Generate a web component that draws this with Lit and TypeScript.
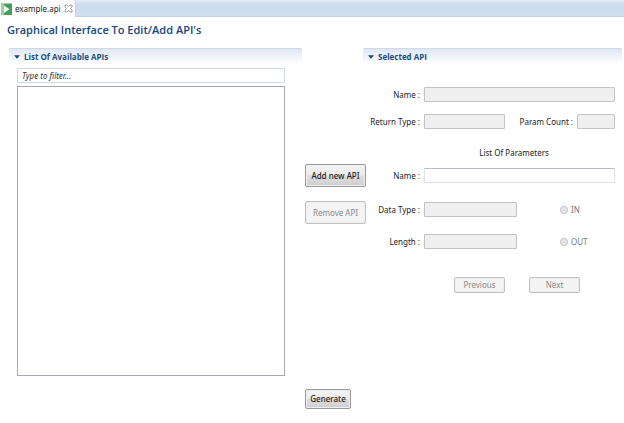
import { LitElement, html, css } from "lit";
import { customElement } from "lit/decorators.js";

@customElement("section-header")
class SectionHeader extends LitElement {
  static styles = css`
    :host { display: block; }
    .head {
      display: flex;
      align-items: center;
      gap: 4px;
      box-sizing: border-box;
      height: 16px;
      margin: 0;
      padding: 0 5px;
      border-top: 1px solid #ccd9e8;
      border-radius: 2px 2px 0 0;
      background: linear-gradient(#dfe7f2, #f1f5fa 55%, #ffffff);
      color: #1a4c82;
      font-family: "Open Sans", "Noto Sans", sans-serif;
      font-size: 8px;
      line-height: 12px;
      font-weight: 700;
      white-space: nowrap;
    }
    .arrow { width: 6px; height: 4px; flex: none; }
  `;
  render() {
    return html`<h2 class="head">
      <svg class="arrow" viewBox="0 0 6 4" aria-hidden="true"><path d="M0 0.3H6L3 3.8Z" fill="#14467c" /></svg><slot></slot>
    </h2>`;
  }
}

@customElement("app-root")
class AppRoot extends LitElement {
  static styles = css`
    :host {
      display: block;
      min-height: 100vh;
      background: #fff;
      color: #222;
      font-family: "Noto Sans", "Open Sans", sans-serif;
      font-size: 8px;
      line-height: 12px;
    }
    * { box-sizing: border-box; }
    .tabs {
      display: flex;
      height: 17px;
      background: linear-gradient(#e2edf7, #cddded 25%, #cfdfee);
      border-bottom: 1px solid #c3d3e6;
    }
    .tab {
      display: flex;
      align-items: center;
      gap: 3px;
      height: 17px;
      padding: 0 2px 0 1px;
      border-right: 1px solid #c3d3e6;
      border-radius: 0 3px 0 0;
      background: #fff;
    }
    .file { width: 11px; height: 12px; }
    .close {
      display: flex;
      margin: 0;
      padding: 0;
      border: 0;
      background: none;
    }
    .close svg { width: 9px; height: 9px; }
    .title {
      margin: 0;
      padding: 5px 7px 0;
      color: #12467f;
      font-family: "Open Sans", "Noto Sans", sans-serif;
      font-size: 11px;
      line-height: 16px;
      font-weight: 600;
    }
    .heads {
      display: grid;
      grid-template-columns: 293fr 259fr;
      gap: 61px;
      padding: 10px 2px 0 9px;
    }
    .body {
      display: grid;
      grid-template-columns: 268fr 61px 229fr;
      column-gap: 20px;
      row-gap: 13px;
      padding: 4px 9px 0 17px;
    }
    .list {
      display: flex;
      flex-direction: column;
      gap: 3px;
    }
    input, button {
      margin: 0;
      font: inherit;
      color: inherit;
    }
    .field {
      width: 100%;
      min-width: 0;
      height: 15px;
      padding: 0 4px;
      border: 1px solid #dde1ea;
      border-top-color: #b9bcc4;
      border-radius: 1px;
      background: #fff;
      outline: 0;
    }
    .field:disabled { border-color: #c3c3c3; background: #efefef; }
    .filter { border-color: #d4dae4; font-style: italic; }
    .filter::placeholder { color: #333; opacity: 1; }
    .entries {
      min-height: 290px;
      margin: 0;
      padding: 0;
      border: 1px solid #a5a8b2;
      list-style: none;
    }
    .actions {
      display: flex;
      flex-direction: column;
      gap: 14px;
      padding-top: 96px;
    }
    .button {
      height: 23px;
      padding: 0;
      border: 1px solid #999;
      border-radius: 2px;
      background: linear-gradient(#f4f4f4, #ebebeb 48%, #dcdcdc 52%, #cfcfcf);
      box-shadow: inset 0 0 0 1px #eee;
      color: #222;
      font-weight: 500;
      white-space: nowrap;
    }
    .button:disabled {
      border-color: #bfc3c6;
      background: #f4f4f4;
      color: #8a8a8a;
      font-weight: 400;
    }
    .generate { grid-column: 2; justify-self: start; width: 46px; height: 20px; }
    .form {
      display: grid;
      grid-template-columns: 54px 1fr;
      align-items: center;
      align-content: start;
      column-gap: 4px;
      margin-left: -20px;
      padding-top: 19px;
    }
    .label { text-align: right; white-space: nowrap; }
    .row { display: flex; align-items: center; justify-content: space-between; }
    .name { margin-bottom: 12px; }
    .type { margin-bottom: 18px; }
    .caption {
      grid-column: 2;
      margin: 0 0 9px;
      font-size: 8px;
      font-weight: 400;
      text-align: center;
      padding-right: 11px;
    }
    .param { margin-bottom: 19px; }
    .data { margin-bottom: 17px; }
    .length { margin-bottom: 28px; }
    .short { width: 81px; }
    .medium { width: 93px; }
    .count { display: flex; align-items: center; gap: 4px; white-space: nowrap; }
    .tiny { width: 38px; }
    .choice {
      display: flex;
      align-items: center;
      gap: 3px;
      width: 55px;
      color: #777;
    }
    .radio {
      appearance: none;
      width: 8px;
      height: 8px;
      border: 1px solid #bdbdbd;
      border-radius: 50%;
      background: radial-gradient(#dcdcdc, #f4f4f4);
    }
    .pager { grid-column: 2; display: flex; gap: 24px; padding-left: 30px; }
    .pager .button { width: 51px; height: 16px; }
  `;

  render() {
    return html`
      <nav class="tabs">
        <div class="tab">
          <svg class="file" viewBox="0 0 11 12" aria-hidden="true">
            <path d="M0 0.5H11V12H0Z" fill="#459c5f" />
            <path d="M0 0.5H3V12H0Z" fill="#9bcfa8" />
            <path d="M3 2.5L8.5 6.2L3 10Z" fill="#f4fff5" />
          </svg>
          <span>example.api</span>
          <button class="close" aria-label="Close">
            <svg viewBox="0 0 9 9"><path d="M1 1H3L4.5 2.7L6 1H8V3L6.4 4.5L8 6V8H6L4.5 6.3L3 8H1V6L2.6 4.5L1 3Z" fill="#fff" stroke="#85888c" stroke-width="0.8" /></svg>
          </button>
        </div>
      </nav>
      <main>
        <h1 class="title">Graphical Interface To Edit/Add API's</h1>
        <div class="heads">
          <section-header>List Of Available APIs</section-header>
          <section-header>Selected API</section-header>
        </div>
        <div class="body">
          <div class="list">
            <input class="field filter" placeholder="Type to filter..." aria-label="Filter" />
            <ul class="entries" aria-label="Available APIs"></ul>
          </div>
          <div class="actions">
            <button class="button">Add new API</button>
            <button class="button" disabled>Remove API</button>
          </div>
          <form class="form">
            <label class="label name" for="api">Name :</label>
            <input class="field name" id="api" disabled />
            <label class="label type" for="ret">Return Type :</label>
            <div class="row type">
              <input class="field short" id="ret" disabled />
              <label class="count">Param Count :<input class="field tiny" disabled /></label>
            </div>
            <h3 class="caption">List Of Parameters</h3>
            <label class="label param" for="param">Name :</label>
            <input class="field param" id="param" />
            <label class="label data" for="data">Data Type :</label>
            <div class="row data">
              <input class="field medium" id="data" disabled />
              <label class="choice"><input class="radio" type="radio" name="dir" disabled />IN</label>
            </div>
            <label class="label length" for="len">Length :</label>
            <div class="row length">
              <input class="field medium" id="len" disabled />
              <label class="choice"><input class="radio" type="radio" name="dir" disabled />OUT</label>
            </div>
            <div class="pager">
              <button class="button" type="button" disabled>Previous</button>
              <button class="button" type="button" disabled>Next</button>
            </div>
          </form>
          <button class="button generate">Generate</button>
        </div>
      </main>
    `;
  }
}
